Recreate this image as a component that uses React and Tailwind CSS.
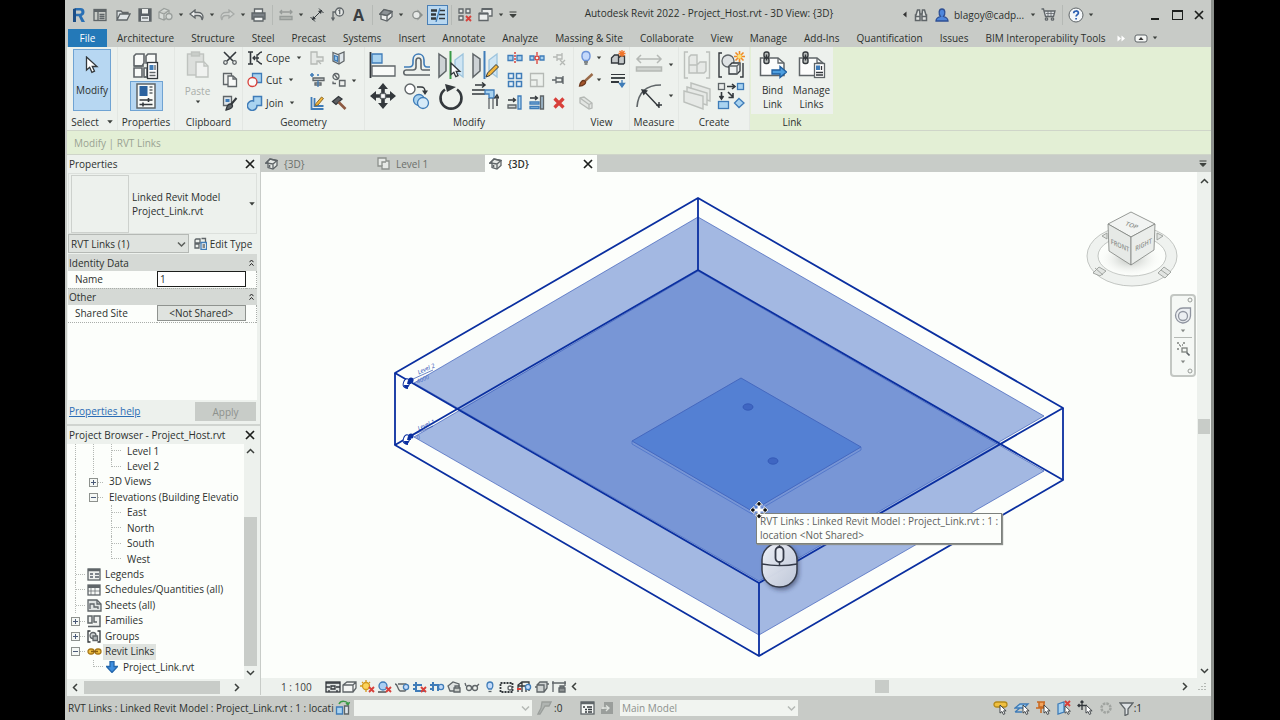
import { clsx } from 'clsx'

/* ---------- drawing helpers ---------- */

const G = '#5f6568'
const D = '#33383c'
const B = '#3f7cb8'
const L = '#a9d3f0'
const M = '#b5b9b5'
const R = '#d8403a'

function Ico({ w = 16, h, className, children }) {
  const height = h || w
  return (
    <svg
      width={w}
      height={height}
      viewBox={`0 0 ${w} ${height}`}
      className={clsx('shrink-0', className)}
      fill="none"
      stroke={G}
      strokeWidth="1.3"
      aria-hidden="true"
    >
      {children}
    </svg>
  )
}

function Caret({ className }) {
  return (
    <svg width="6" height="4" viewBox="0 0 6 4" className={clsx('shrink-0', className)} aria-hidden="true">
      <path d="M0.8 0.5h4.4L3 3.2z" fill="#3c403d" />
    </svg>
  )
}

function Chevron({ dir = 'down', className }) {
  const d = {
    down: 'M1 3l3.5 3.5L8 3',
    up: 'M1 6l3.5-3.5L8 6',
    left: 'M6 1L2.5 4.5 6 8',
    right: 'M3 1l3.5 3.5L3 8',
  }[dir]
  return (
    <svg width="9" height="9" viewBox="0 0 9 9" className={clsx('shrink-0', className)} aria-hidden="true">
      <path d={d} fill="none" stroke="currentColor" strokeWidth="1.5" />
    </svg>
  )
}

function Cross({ size = 10, className }) {
  return (
    <svg width={size} height={size} viewBox="0 0 10 10" className={className} aria-hidden="true">
      <path d="M1 1l8 8M9 1L1 9" stroke="#1c1e1c" strokeWidth="1.7" />
    </svg>
  )
}

const pointer = (x, y, s = 1) => (
  <path
    transform={`translate(${x} ${y}) scale(${s})`}
    d="M0 0v9l2.2-1.8 1.5 3.3 1.7-.8L4 6.5h2.8z"
    fill="#fff"
    stroke={D}
    strokeWidth="1"
  />
)

const redX = (x, y, s = 5) => (
  <path d={`M${x} ${y}l${s} ${s}M${x + s} ${y}l${-s} ${s}`} stroke={R} strokeWidth="1.9" />
)

const chain = (x, y) => (
  <g strokeWidth="1.4" stroke={D} fill="#b9bdbb">
    <rect x={x - 2.5} y={y - 2.5} width="5" height="5.5" rx="2" />
    <rect x={x - 2.5} y={y + 3.5} width="5" height="5.5" rx="2" />
    <path d={`M${x} ${y}v6`} />
  </g>
)

/* ---------- quick access icons ---------- */

const qat = {
  home: (
    <Ico w={14}>
      <rect x="1" y="1.5" width="12" height="11" />
      <path d="M1 3h12" strokeWidth="2" />
      <path d="M5 4v8" />
      <path d="M6.5 6.5h5M6.5 8.5h5M6.5 10.5h5" />
    </Ico>
  ),
  open: (
    <Ico w={15} h={14}>
      <path d="M1 12V3h4l1.5 1.5H12V6M1 12l3-6h10l-3 6z" fill="#dfe4e6" />
    </Ico>
  ),
  save: (
    <Ico w={14}>
      <path d="M1 1h12v12H1z" fill="#5a6067" />
      <path d="M4 1h6v4.5H4z" fill="#eceeed" stroke="none" />
      <path d="M3 8h8v5H3z" fill="#dfe3e6" stroke="none" />
      <path d="M4 10h6" />
    </Ico>
  ),
  sync: (
    <Ico w={15}>
      <g stroke="#9a9f9c" fill="#d6dad7">
        <path d="M1 5l5-3.5 5 2v6L6 13l-5-2zM1 5l5 2 5-3.5M6 7v6" />
        <circle cx="11" cy="9.5" r="3" />
      </g>
    </Ico>
  ),
  undo: (
    <Ico w={15} h={12}>
      <path d="M1 5l5-4v2.5h3c3 0 5 2 5 4.5 0 1.2-.5 2-1 3 0-3-1.5-4.5-4-4.5H6V9z" fill="#eceeed" />
    </Ico>
  ),
  redo: (
    <Ico w={15} h={12}>
      <path d="M14 5L9 1v2.5H6C3 3.5 1 5.5 1 8c0 1.2.5 2 1 3 0-3 1.5-4.5 4-4.5h3V9z" stroke="#a6aaa7" fill="#d0d3d0" />
    </Ico>
  ),
  print: (
    <Ico w={15} h={14}>
      <path d="M3.5 5V1h8v4" fill="#f3f5f4" />
      <path d="M1 5h13v6H1z" fill="#7b8186" />
      <path d="M3 9h9v4H3z" fill="#f3f5f4" />
    </Ico>
  ),
  measure: (
    <Ico w={14} h={12}>
      <path d="M1 3h12M3 1L1 3l2 2M11 1l2 2-2 2" stroke="#969b98" />
      <path d="M1 7.5h12v3H1z" fill="#b4b8b5" stroke="#969b98" />
    </Ico>
  ),
  dimension: (
    <Ico w={14}>
      <path d="M2 12L12 2M0.5 9l4.5 4.5M9 0.5L13.5 5" stroke={D} strokeWidth="1" />
      <path d="M2 12l1-4 3 3zM12 2L8 3l3 3z" fill={D} stroke="none" />
    </Ico>
  ),
  tag: (
    <Ico w={15}>
      <circle cx="9.5" cy="5" r="4" fill="#e6e9e7" />
      <path d="M8.5 3.8l1.2-.8v4.2M5.5 5H3v7M1.5 10.5L3 13l1.5-2.5" />
    </Ico>
  ),
  cube: (
    <Ico w={14}>
      <path d="M1 6l4-4 8 1.5v5L8 13 2 11V6z" fill="#eceeed" />
      <path d="M2 6l6 1.5L13 4M8 7.5V13" />
      <path d="M1 6l4-4.5L13 3.5 8 7.5z" fill="#8d9397" />
    </Ico>
  ),
  section: (
    <Ico w={14}>
      <path d="M7.5 1.5L13 7l-5.5 5.5z" fill="#8a8f8c" stroke="none" />
      <circle cx="6.5" cy="7" r="3.7" fill="#e6e9e7" stroke="#8a8f8c" />
    </Ico>
  ),
  thin: (
    <Ico w={16} h={14}>
      <path d="M1 2.5h6M1 6.5h5M1 10.5h5" strokeWidth="2.4" stroke={D} />
      <path d="M10 2.5h5M9 6.5h6M9 10.5h6" stroke={D} />
      <path d="M10 0L6 14" stroke={B} />
    </Ico>
  ),
  closeHidden: (
    <Ico w={14}>
      <path d="M1 1h4v4H1zM8 1h4v4H8zM1 8h4v4H1z" fill="#e6e9e7" />
      {redX(8, 8)}
    </Ico>
  ),
  windows: (
    <Ico w={15} h={14}>
      <path d="M4 4V1h10v7h-3" fill="#eceeed" />
      <path d="M1 5.5h9v7H1z" fill="#eceeed" />
      <path d="M1 5.5h9M4 1h10" strokeWidth="2.2" />
    </Ico>
  ),
}

function RevitLogo() {
  return (
    <svg width="14" height="16" viewBox="0 0 14 16" aria-hidden="true">
      <path d="M1 2l3-1v14H1z" fill="#1d4e86" />
      <path d="M4 1h4.5C11 1 12.500 2.600 12.500 5c0 2-1 3.300-2.800 3.900L13 15H9.500L6.700 9.300H4V6.800h3.800c1 0 1.600-.7 1.600-1.700S8.800 3.500 7.800 3.500H4z" fill="#2a70b5" />
    </svg>
  )
}

/* ---------- ribbon icons ---------- */

const big = {
  arrow: (
    <Ico w={14} h={18}>
      <path d="M1.5 1v13l3.2-2.7 2.2 5 2.6-1.1L7.3 10.5H12z" fill="#fff" stroke={D} />
    </Ico>
  ),
  typeProps: (
    <Ico w={28}>
      <path d="M2 4l2-2h8v9l-2 3H2zM14 4l2-2h8v9H14zM2 16h8v9l-8 0zM12 16h3v9h-3z" fill="#f8faf8" strokeWidth="1.6" />
      <path d="M2 14h10M12 25h3" strokeWidth="1.6" />
      <rect x="15.5" y="10.5" width="10" height="16" fill="#fff" stroke={D} />
      <path d="M17.5 13h4v5h-4z" fill={B} stroke="none" />
      <path d="M17.5 20.5h6M17.5 23.5h6M23 13v5" />
    </Ico>
  ),
  properties: (
    <Ico w={20} h={26}>
      <rect x="1" y="1" width="18" height="24" fill="#f8faf8" strokeWidth="1.5" />
      <path d="M3.5 3h8v10h-8z" fill="#2b629e" stroke="none" />
      <path d="M13.5 4h3M13.5 7h3M13.5 10h3" />
      <path d="M3.5 17h13M3.5 21.5h13" stroke={D} />
      <path d="M12.5 15v4M7 19.5v4" stroke={D} strokeWidth="1.6" />
    </Ico>
  ),
  paste: (
    <Ico w={24} h={28}>
      <g stroke="#bfc3bf" strokeWidth="1.4">
        <rect x="1.5" y="3" width="16" height="21" fill="#dcdfdc" />
        <rect x="5.5" y="1" width="8" height="4" fill="#c9cdc9" />
        <path d="M10 11h8l4 4v11H10z" fill="#f0f2f0" />
        <path d="M18 11v4h4" />
      </g>
    </Ico>
  ),
  align: (
    <Ico w={28}>
      <path d="M1.5 1v26" stroke={D} strokeWidth="1.8" />
      <path d="M3 3h10v9H3z" fill={L} stroke={B} />
      <path d="M3 15h23v10H3z" fill="#f8faf8" />
    </Ico>
  ),
  offset: (
    <Ico w={28}>
      <path d="M1 16h5c3 0 4-1 4-4V9c0-8 11-8 11 0v3c0 3 1 4 3 4h3" stroke={B} strokeWidth="1.6" />
      <path d="M27 19h-7c-2 0-2-1-2-3V10c0-4-5-4-5 0v6c0 2-1 3-3 3H3c-3 0-3 5 0 5h24" strokeWidth="1.6" />
    </Ico>
  ),
  mirrorPick: (
    <Ico w={28}>
      <path d="M2 3l7 5v12l-7 6z" fill="#cdd2d5" strokeWidth="1.5" />
      <path d="M26 3l-8 6v11l8 6z" fill="#cfe5f3" stroke="#9cc4dd" />
      <path d="M13.5 0v28" stroke="#3a9a46" strokeWidth="2" />
      {pointer(14, 12, 1.3)}
    </Ico>
  ),
  mirrorDraw: (
    <Ico w={28}>
      <path d="M2 3l7 5v12l-7 6z" fill="#cdd2d5" strokeWidth="1.5" />
      <path d="M26 3l-8 6v11l8 6z" fill="#cfe5f3" stroke="#9cc4dd" />
      <path d="M13.5 0v28" stroke={B} strokeWidth="2" />
      <path d="M15 26l1.5-4L25 13.5l2.5 2.5-8.5 8.5z" fill="#f3b53a" stroke={D} strokeWidth="1" />
    </Ico>
  ),
  move: (
    <Ico w={28}>
      <path
        d="M14 1l5 6h-3.2v4h-3.6V7H9zM14 27l5-6h-3.2v-4h-3.6v4H9zM1 14l6-5v3.2h4v3.6H7V19zM27 14l-6-5v3.2h-4v3.6h4V19z"
        fill={D}
        stroke="none"
      />
      <rect x="11.5" y="11.5" width="5" height="5" fill="#fff" />
    </Ico>
  ),
  copy: (
    <Ico w={28}>
      <circle cx="7" cy="7" r="5" fill="#fff" strokeWidth="1.4" />
      <path d="M14 5h4c3 0 4 1 4 5" stroke={D} strokeWidth="1.5" />
      <path d="M19 8.5h6L22 13z" fill={D} stroke="none" />
      <circle cx="16" cy="18" r="5.5" fill={L} stroke={B} />
      <circle cx="20" cy="21" r="5.5" fill="#d5eaf8" stroke={B} />
    </Ico>
  ),
  rotate: (
    <Ico w={28}>
      <path d="M8 7.5A10.5 10.5 0 1 0 20 7.5" stroke={D} strokeWidth="2.6" />
      <path d="M8 2l11 3-9 5z" fill={D} stroke="none" />
    </Ico>
  ),
  trim: (
    <Ico w={28}>
      <path d="M1 8h13M1 12h13" stroke={D} />
      <path d="M14 8h9v8h-5v-4h-4z" fill={L} stroke={B} />
      <path d="M18 16v11M22 16v11" />
      <path d="M4 3h9M11 0.5L14 3l-3 2.5M26 24v-9M23.5 16.5L26 13l2 3.5" stroke={D} strokeWidth="1.5" />
    </Ico>
  ),
  measureBetween: (
    <Ico w={28}>
      <g stroke={M} strokeWidth="1.5">
        <path d="M2 8h24M6 4L2 8l4 4M22 4l4 4-4 4" />
        <path d="M1.5 16h25v4h-25z" fill="#cfd3cf" />
      </g>
    </Ico>
  ),
  aligned: (
    <Ico w={28}>
      <path d="M2 25C3 12 10 3 26 3" strokeWidth="1.6" />
      <path d="M9 9l15 16M21 23h6M24 20v6" stroke={D} strokeWidth="1.4" />
      <path d="M6 7l7 1.5-4.5 5z" fill={D} stroke="none" />
    </Ico>
  ),
  createAssembly: (
    <Ico w={28}>
      <g stroke="#bcc0bc" strokeWidth="1.4">
        <path d="M5 1H1.5v26H5M23 1h3.5v26H23" />
        <path d="M6 6l2-2h6v10H6zM6 14h8v8H6zM14 14l3-3h6v9l-2 2h-7z" fill="#e6e9e6" />
      </g>
    </Ico>
  ),
  createGroup: (
    <Ico w={28}>
      <path d="M5 2H2v24h3M23 26h3V12" stroke={D} strokeWidth="1.4" />
      <circle cx="11" cy="10" r="6" fill="#dfe3e4" />
      <path d="M12 15l3-3h8v8l-3 3h-8z" fill="#eef1f0" stroke={D} />
      <path d="M12 15h8v8M20 15l3-3" />
      <g stroke="#f08a24" strokeWidth="1.6">
        <path d="M22.5 0v11M17 5.5h11M18.5 1.5l8 8M26.5 1.5l-8 8" />
      </g>
      <circle cx="22.5" cy="5.5" r="2.2" fill="#fbe27a" stroke="none" />
    </Ico>
  ),
  createParts: (
    <Ico w={28}>
      <g stroke="#bcc0bc" strokeWidth="1.4" fill="#e6e9e6">
        <path d="M8 1l19 6v12L8 13z" />
        <path d="M4 5l20 6v12L4 17z" />
        <path d="M1 9l19 5v13L1 20z" />
      </g>
    </Ico>
  ),
  createSimilar: (
    <Ico w={28}>
      <rect x="1.5" y="1.5" width="6" height="6" fill="#e9ecea" />
      <rect x="20.5" y="1.5" width="6" height="6" fill={L} stroke={B} />
      <rect x="1.5" y="19.5" width="10" height="7" fill={L} stroke={B} />
      <path d="M22 16.5l5 4.5-5 4.5-4.5-4.5z" fill={L} stroke={B} />
      <g stroke={D} strokeWidth="1.6">
        <path d="M10 4.5h7M15 2l3 2.5L15 7M4.5 10v6M2.5 14l2 3 2-3M11 10l5 5M16 11v4.5h-4.5" />
      </g>
    </Ico>
  ),
  bindLink: (
    <Ico w={28}>
      <path d="M1.5 7H19l6 5v12.5H1.5z" fill="#fcfdfc" strokeWidth="1.5" />
      <path d="M19 7v5h6" />
      {chain(7.5, 3.5)}
      <path d="M13 19h8v-3.5l6.5 5.5-6.5 5.5V23h-8z" fill="#4d9fe0" stroke="#1f5f9f" />
    </Ico>
  ),
  manageLinks: (
    <Ico w={28}>
      <path d="M1.5 7H19l6 5v12.5H1.5z" fill="#fcfdfc" strokeWidth="1.5" />
      <path d="M19 7v5h6" />
      {chain(7.5, 3.5)}
      <rect x="16.5" y="12.5" width="10" height="14" fill="#fff" />
      <path d="M18 14.5h4v4.5h-4z" fill={B} stroke="none" />
      <path d="M23.5 15v4M18 21.5h7M18 24h7" stroke={D} />
    </Ico>
  ),
}

const sm = {
  cut: (
    <Ico>
      <path d="M2 2l9 9M14 2l-9 9" stroke={D} strokeWidth="1.6" />
      <circle cx="3.5" cy="12.5" r="1.8" />
      <circle cx="12.5" cy="12.5" r="1.8" />
    </Ico>
  ),
  copy: (
    <Ico>
      <path d="M1.5 1.5h8v11h-8z" fill="#eef0ee" />
      <path d="M6 4h5l3.5 3v7.5H6z" fill="#f8faf8" />
      <path d="M11 4v3h3" />
    </Ico>
  ),
  match: (
    <Ico>
      <path d="M1.5 1.5h8v9h-8z" fill="#dfe6ea" />
      <path d="M3.5 4h4v3h-4z" fill={B} stroke="none" />
      <path d="M14.5 3L9 9.5" stroke={D} strokeWidth="2" />
      <path d="M4 15c1-5 3-7 6-5.5 1.5 2 0 4.5-6 5.5z" fill={G} stroke={D} />
    </Ico>
  ),
  cope: (
    <Ico>
      <path d="M1 2h5M1 14h5M3.5 2v12" stroke={D} strokeWidth="1.6" />
      <path d="M15 2c-3 0-3 3-5 3v6c2 0 2 3 5 3M6 8h6M8 6L6 8l2 2" stroke={D} />
    </Ico>
  ),
  cutGeo: (
    <Ico>
      <path d="M5.5 1.5h9v9h-9z" fill={L} stroke={B} />
      <circle cx="5.5" cy="10" r="4.5" fill="#f8faf8" stroke={R} />
    </Ico>
  ),
  join: (
    <Ico>
      <path d="M6.5 1.5h8v9H10A4.8 4.8 0 1 1 6.500 6z" fill={L} stroke={B} strokeWidth="1.5" />
    </Ico>
  ),
  wallJoin: (
    <Ico>
      <path d="M2 2h6v5h6v4H8v3H2z" stroke={M} fill="#e6e9e6" />
      <path d="M9 11l3 3" stroke={M} />
    </Ico>
  ),
  beam: (
    <Ico>
      <path d="M1 3h4M3 1v4M8 3h2" stroke={B} strokeWidth="1.6" />
      <path d="M4 6h11v2.5H4z" fill="#d5d9d8" />
      <path d="M6 11h6v2H6z" />
      <path d="M9 8.5V15" stroke={B} />
    </Ico>
  ),
  splitFace: (
    <Ico>
      <path d="M2.5 2v12h12M5.5 3v8h9" stroke={B} strokeWidth="1.8" />
      <path d="M7 8.5l5.5-6.5 2 1.5L9 10l-3 1z" fill="#f3b53a" stroke="#8a6a2a" strokeWidth="1" />
    </Ico>
  ),
  paint: (
    <Ico>
      <path d="M2 2.5l5 2 6-2.5v9L8 14l-6-3z" fill="#dfe6ea" />
      <path d="M3.5 5.5l3 1.2v4.5l-3-1.2z" fill={L} stroke={B} />
      <path d="M8 5v8.5" />
    </Ico>
  ),
  demolish: (
    <Ico>
      <circle cx="5" cy="4.5" r="3" />
      <path d="M3 2l4 5M2 9.5v2h3M8.5 8.5h5.5v5.5H8.5z" fill="#eef0ee" />
    </Ico>
  ),
  hammer: (
    <Ico>
      <path d="M1.5 6.5l6-5 3.5 2.5-6 5.5z" fill="#5d5f63" stroke={D} />
      <path d="M7.5 7l7 7" stroke="#8d5a42" strokeWidth="2.6" />
    </Ico>
  ),
  splitEl: (
    <Ico>
      <path d="M1 5.5h5v5H1zM10 5.5h5v5h-5z" fill={L} stroke={B} />
      <path d="M8 2v12" stroke={R} strokeDasharray="2 1" strokeWidth="1.5" />
    </Ico>
  ),
  splitGap: (
    <Ico>
      <path d="M1 6h4v4H1zM11 6h4v4h-4z" fill={L} stroke={B} />
      <circle cx="8" cy="8" r="2" stroke={R} />
      <path d="M8 2v3M8 11v3" stroke={R} />
    </Ico>
  ),
  unpin: (
    <Ico>
      <path d="M2 7h4M6 4v7M6 5h5v4H6M11 3v5" stroke={M} />
      <path d="M9 10l5 5M14 10l-5 5" stroke={M} />
    </Ico>
  ),
  array: (
    <Ico>
      <path d="M1.5 1.5h5v5h-5zM9.5 1.5h5v5h-5zM1.5 9.5h5v5h-5zM9.5 9.5h5v5h-5z" fill="#e6f1f8" stroke={B} strokeWidth="1.5" />
    </Ico>
  ),
  scale: (
    <Ico>
      <path d="M1.5 1.5h13v13h-13z" stroke={M} />
      <path d="M1.5 8h6.5v6.5" stroke={M} />
    </Ico>
  ),
  pin: (
    <Ico>
      <path d="M1 8h4M5 4.5v7M5 6h6v4H5M12 4v8" stroke={G} />
    </Ico>
  ),
  trimOne: (
    <Ico>
      <path d="M1 5h7M6 3l2.5 2L6 7" stroke={D} />
      <path d="M1 10h8v3H1z" fill="#d0d5d6" />
      <path d="M11 1h3v13h-3z" fill={L} stroke={B} />
    </Ico>
  ),
  trimMany: (
    <Ico>
      <path d="M1 3h7M6 1l2.5 2L6 5" stroke={D} />
      <path d="M1 7h9v2H1zM1 11.5h9v2H1z" fill={L} stroke={B} />
      <path d="M11.5 1h3v13h-3z" fill="#9fb9cc" />
    </Ico>
  ),
  del: (
    <Ico>
      <path d="M3.5 3.5l9 9M12.5 3.5l-9 9" stroke={R} strokeWidth="3.2" />
    </Ico>
  ),
  bulb: (
    <Ico>
      <path d="M6 10.5C3 8 3 1.5 8 1.5s5 6.5 2 9z" fill="#c4d9fb" stroke="#6d93d8" />
      <path d="M6 12h4M6.5 14h3" />
    </Ico>
  ),
  displace: (
    <Ico>
      <path d="M1.5 8l3-3h4v8h-7zM8.5 8l2-2h4v7l-1 1h-5z" fill="#c5c9ca" stroke={D} />
      <path d="M12 0v7M8.5 3.5h7M9.5 1l5 5M14.5 1l-5 5" stroke="#f0742a" strokeWidth="1.3" />
    </Ico>
  ),
  brush: (
    <Ico>
      <path d="M14.5 2L7 9" stroke="#9a6b49" strokeWidth="2.4" />
      <path d="M1.5 14c.5-4 3-6.5 5.5-5 2 2-1.5 5-5.5 5z" fill="#a4552c" stroke="#6d3a1f" />
    </Ico>
  ),
  linework: (
    <Ico>
      <path d="M1 2.5h14" strokeWidth="1" stroke={D} />
      <path d="M1 6h14" strokeWidth="1.8" stroke={D} />
      <path d="M1 10h8" strokeWidth="2" stroke={D} />
      <path d="M12 8v4M9.5 11.5h5L12 15z" stroke={B} fill={B} />
    </Ico>
  ),
  hide: (
    <Ico>
      <path d="M2 3l4-1 8 6v5l-3 1-9-6z" fill="#e2e5e2" stroke={M} />
      <path d="M2 3l9 6.5V14M11 9.5l3-1.5" stroke={M} />
    </Ico>
  ),
}

function IconBtn({ label, className, children }) {
  return (
    <button type="button" aria-label={label} title={label} className={clsx('flex items-center justify-center', className)}>
      {children}
    </button>
  )
}

/* ---------- title bar ---------- */

const Sep = () => (
  <span className="flex w-[6px] shrink-0 justify-center">
    <span className="h-5 w-px bg-[#b5b9b5]" />
  </span>
)

const Drop = ({ label }) => (
  <IconBtn label={label} className="h-6 w-[10px] shrink-0">
    <Caret />
  </IconBtn>
)

function QatButton({ label, active, children }) {
  return (
    <IconBtn
      label={label}
      className={clsx('h-5 w-[21px] shrink-0', active && 'border border-[#4a7fb5] bg-[#b9d8f1]')}
    >
      {children}
    </IconBtn>
  )
}

function TitleBar() {
  return (
    <header className="flex h-[29px] items-center pl-px">
      <QatButton label="Revit"><RevitLogo /></QatButton>
      <QatButton label="Home">{qat.home}</QatButton>
      <span className="w-[3px]" />
      <QatButton label="Open">{qat.open}</QatButton>
      <QatButton label="Save">{qat.save}</QatButton>
      <QatButton label="Synchronize">{qat.sync}</QatButton>
      <Drop label="Synchronize options" />
      <QatButton label="Undo">{qat.undo}</QatButton>
      <Drop label="Undo history" />
      <QatButton label="Redo">{qat.redo}</QatButton>
      <Drop label="Redo history" />
      <QatButton label="Print">{qat.print}</QatButton>
      <Sep />
      <QatButton label="Measure">{qat.measure}</QatButton>
      <Drop label="Measure options" />
      <QatButton label="Aligned Dimension">{qat.dimension}</QatButton>
      <QatButton label="Tag by Category">{qat.tag}</QatButton>
      <QatButton label="Text"><span className="text-[16px] leading-4 font-bold text-[#3a3e41]">A</span></QatButton>
      <Sep />
      <QatButton label="Default 3D View">{qat.cube}</QatButton>
      <Drop label="3D View options" />
      <QatButton label="Section">{qat.section}</QatButton>
      <QatButton label="Thin Lines" active>{qat.thin}</QatButton>
      <Sep />
      <QatButton label="Close Inactive Views">{qat.closeHidden}</QatButton>
      <QatButton label="Switch Windows">{qat.windows}</QatButton>
      <Drop label="Window list" />
      <IconBtn label="Customize toolbar" className="w-[14px] shrink-0">
        <svg width="8" height="7" viewBox="0 0 8 7" aria-hidden="true">
          <path d="M0.5 1h7M1 3.5h6L4 6.5z" fill="#3c403d" stroke="#3c403d" strokeWidth="1" />
        </svg>
      </IconBtn>
      <h1 className="min-w-0 flex-1 truncate pb-1 text-center">
        Autodesk Revit 2022 - Project_Host.rvt - 3D View: {'{3D}'}
      </h1>
      <div className="flex shrink-0 items-center">
        <IconBtn label="Collapse search" className="w-3">
          <svg width="5" height="7" viewBox="0 0 5 7" aria-hidden="true"><path d="M4.5 0.5v6L1 3.5z" fill="#333" /></svg>
        </IconBtn>
        <QatButton label="Search">
          <Ico w={14}>
            <path d="M2 7l1.5-5h2L6 7v5.5H1.5V7zM12 7l-1.5-5h-2L8 7v5.5h4.5V7zM6 6h2" strokeWidth="1.5" fill="#e0e3e1" />
            <path d="M1.5 8.5H6M8 8.5h4.5" />
          </Ico>
        </QatButton>
        <QatButton label="Account">
          <Ico w={14}>
            <path d="M7 1C3.5 1 3.5 6 5.5 8.5 2 9.5 1 11 1 13h12c0-2-1-3.5-4.5-4.5C10.5 6 10.5 1 7 1z" fill="#4d86dc" stroke="#2e4f93" />
          </Ico>
        </QatButton>
        <a href="#account" className="w-[76px] pl-[2px]">blagoy@cadp...</a>
        <Drop label="Account menu" />
        <QatButton label="App Store">
          <Ico w={15}>
            <path d="M0.5 2h2l2 7.5h8L14 4H3.5" fill="#dfe3e6" />
            <path d="M5 6.5h8M7 4v5M10 4v5" strokeWidth="0.8" />
            <circle cx="5.5" cy="12" r="1.2" />
            <circle cx="11.5" cy="12" r="1.2" />
          </Ico>
        </QatButton>
        <Sep />
        <QatButton label="Help">
          <svg width="16" height="16" viewBox="0 0 16 16" aria-hidden="true">
            <circle cx="8" cy="8" r="7" fill="#f3f6f8" stroke="#5f6568" />
            <path d="M5.7 6.3C5.7 3.2 10.5 3.3 10.4 6c0 1.6-2.3 1.8-2.3 3.6M8.1 11v1.5" fill="none" stroke="#2a5db0" strokeWidth="1.7" />
          </svg>
        </QatButton>
        <Drop label="Help menu" />
      </div>
      <div className="ml-12 flex shrink-0 items-center">
        <IconBtn label="Minimize" className="w-[22px]">
          <span className="mt-2 h-[2px] w-2 bg-[#1c1e1c]" />
        </IconBtn>
        <IconBtn label="Maximize" className="w-[22px]">
          <span className="h-[10px] w-[11px] border border-t-2 border-[#1c1e1c]" />
        </IconBtn>
        <IconBtn label="Close" className="w-[22px]"><Cross /></IconBtn>
      </div>
      <span className="w-px" />
    </header>
  )
}

const ribbonTabs = [
  'Architecture', 'Structure', 'Steel', 'Precast', 'Systems', 'Insert', 'Annotate', 'Analyze',
  'Massing & Site', 'Collaborate', 'View', 'Manage', 'Add-Ins', 'Quantification', 'Issues',
  'BIM Interoperability Tools',
]

function RibbonTabs() {
  return (
    <nav className="flex h-[18px] items-center gap-[17px] pl-px whitespace-nowrap">
      <button type="button" className="-mr-[7px] h-full w-[39px] shrink-0 bg-[#2479b8] text-white">File</button>
      {ribbonTabs.map((t) => (
        <button key={t} type="button" className="leading-4">{t}</button>
      ))}
      <div className="-ml-[6px] flex items-center gap-2">
        <svg width="9" height="7" viewBox="0 0 9 7" aria-hidden="true">
          <path d="M0.5 0.5v6L4 3.5zM4.5 0.5v6L8 3.5z" fill="#fff" />
        </svg>
        <IconBtn label="Minimize ribbon">
          <svg width="14" height="9" viewBox="0 0 14 9" aria-hidden="true">
            <rect x="1" y="1" width="12" height="7" rx="2" fill="#f3f5f3" stroke="#5f6568" />
            <path d="M7 3l2.5 3h-5z" fill="#333" />
          </svg>
        </IconBtn>
        <Caret className="-ml-1" />
      </div>
    </nav>
  )
}

/* ---------- ribbon ---------- */

function Panel({ title, className, children, tinted }) {
  return (
    <section className={clsx('flex shrink-0 flex-col', className, !tinted && 'border-r border-[#e3e7e3] bg-[#edf1ed]')}>
      <div className={clsx('flex h-[67px] justify-center', tinted && 'bg-[#edf1ed]')}>{children}</div>
      <h2 className="flex h-[16px] items-center justify-center">{title}</h2>
    </section>
  )
}

function SmallGrid({ rows, className }) {
  return (
    <div className={clsx('grid grid-rows-3', className)}>
      {rows.map(([label, icon]) => (
        <IconBtn key={label} label={label}>{icon}</IconBtn>
      ))}
    </div>
  )
}

function TextTool({ label, icon }) {
  return (
    <button type="button" className="flex items-center gap-[3px]">
      {icon}
      <span className="flex items-center gap-[6px]">
        {label}
        <Caret />
      </span>
    </button>
  )
}

function Ribbon() {
  return (
    <div className="flex min-h-[84px] border-b border-[#cfd5c9] bg-[#e3efd5]">
      <Panel className="w-[51px]" title={<>Select <Caret className="ml-2 scale-125" /></>}>
        <button type="button" className="mt-[2px] flex h-[62px] w-[38px] flex-col items-center gap-2 border border-[#6fa3d3] bg-[#b7d7f2] pt-[6px]">
          {big.arrow}
          Modify
        </button>
      </Panel>
      <Panel className="w-[57px]" title="Properties">
        <div className="flex flex-col items-center pt-1">
          <IconBtn label="Type Properties" className="h-[29px]">{big.typeProps}</IconBtn>
          <IconBtn label="Properties" className="mt-px h-[30px] w-[33px] border border-[#6fa3d3] bg-[#b7d7f2]">
            {big.properties}
          </IconBtn>
        </div>
      </Panel>
      <Panel className="w-[68px]" title="Clipboard">
        <button type="button" className="flex w-[42px] flex-col items-center pt-1 text-[#a9ada9]">
          {big.paste}
          <span className="mt-1 leading-4">Paste</span>
          <Caret className="mt-px" />
        </button>
        <SmallGrid className="w-[22px]" rows={[['Cut to Clipboard', sm.cut], ['Copy to Clipboard', sm.copy], ['Match Type', sm.match]]} />
      </Panel>
      <Panel className="w-[122px]" title="Geometry">
        <div className="grid w-[59px] grid-rows-3 justify-start">
          <TextTool label="Cope" icon={sm.cope} />
          <TextTool label="Cut" icon={sm.cutGeo} />
          <TextTool label="Join" icon={sm.join} />
        </div>
        <SmallGrid className="w-[22px]" rows={[['Wall Joins', sm.wallJoin], ['Beam Joins', sm.beam], ['Split Face', sm.splitFace]]} />
        <SmallGrid className="w-[22px]" rows={[['Paint', sm.paint], ['Demolish', sm.demolish], ['Hammer', sm.hammer]]} />
        <div className="flex w-[10px] items-center"><Caret className="ml-px" /></div>
      </Panel>
      <Panel className="w-[209px]" title="Modify">
        <div className="grid grid-cols-4 grid-rows-2 py-[2px]">
          <IconBtn label="Align" className="w-[34px]">{big.align}</IconBtn>
          <IconBtn label="Offset">{big.offset}</IconBtn>
          <IconBtn label="Mirror - Pick Axis">{big.mirrorPick}</IconBtn>
          <IconBtn label="Mirror - Draw Axis">{big.mirrorDraw}</IconBtn>
          <IconBtn label="Move">{big.move}</IconBtn>
          <IconBtn label="Copy">{big.copy}</IconBtn>
          <IconBtn label="Rotate">{big.rotate}</IconBtn>
          <IconBtn label="Trim/Extend to Corner">{big.trim}</IconBtn>
        </div>
        <SmallGrid className="ml-[2px] w-[22px]" rows={[['Split Element', sm.splitEl], ['Array', sm.array], ['Trim Single', sm.trimOne]]} />
        <SmallGrid className="w-[22px]" rows={[['Split with Gap', sm.splitGap], ['Scale', sm.scale], ['Trim Multiple', sm.trimMany]]} />
        <SmallGrid className="mr-[3px] w-[22px]" rows={[['Unpin', sm.unpin], ['Pin', sm.pin], ['Delete', sm.del]]} />
      </Panel>
      <Panel className="w-[56px]" title="View">
        <SmallGrid className="w-5" rows={[['Hide in View', sm.bulb], ['Override Graphics', sm.brush], ['Selection Box', sm.hide]]} />
        <div className="grid w-3 grid-rows-3 items-center"><Caret /><Caret /></div>
        <SmallGrid className="w-5" rows={[['Displace Elements', sm.displace], ['Linework', sm.linework]]} />
      </Panel>
      <Panel className="w-[49px]" title="Measure">
        <div className="grid grid-rows-2 py-[2px]">
          <IconBtn label="Measure Between" className="gap-[5px]">{big.measureBetween}<Caret /></IconBtn>
          <IconBtn label="Aligned" className="gap-[5px]">{big.aligned}<Caret /></IconBtn>
        </div>
      </Panel>
      <Panel className="w-[71px]" title="Create">
        <div className="grid grid-cols-2 grid-rows-2 gap-x-[6px] py-[2px]">
          <IconBtn label="Create Assembly">{big.createAssembly}</IconBtn>
          <IconBtn label="Create Group">{big.createGroup}</IconBtn>
          <IconBtn label="Create Parts">{big.createParts}</IconBtn>
          <IconBtn label="Create Similar">{big.createSimilar}</IconBtn>
        </div>
      </Panel>
      <Panel className="ml-[1px] w-[82px]" title="Link" tinted>
        <button type="button" className="flex w-[39px] flex-col items-center pt-1 leading-[14px]">
          {big.bindLink}
          <span className="mt-1">Bind<br />Link</span>
        </button>
        <button type="button" className="flex w-[39px] flex-col items-center pt-1 leading-[14px]">
          {big.manageLinks}
          <span className="mt-1">Manage<br />Links</span>
        </button>
      </Panel>
    </div>
  )
}

/* ---------- properties palette ---------- */

function PaletteHeader({ title }) {
  return (
    <div className="flex h-[18px] shrink-0 items-center justify-between pr-[2px] pl-px">
      <h2>{title}</h2>
      <IconBtn label={`Close ${title}`}><Cross /></IconBtn>
    </div>
  )
}

function GroupRow({ title }) {
  return (
    <tr className="h-[17px] bg-[#d5d9d5]">
      <th colSpan={3} className="p-0 font-normal">
        <div className="flex items-center justify-between pr-[3px] pl-px leading-4">
          {title}
          <svg width="5" height="8" viewBox="0 0 5 8" aria-hidden="true">
            <path d="M0.5 3.2L2.5 1l2 2.2M0.5 6.7l2-2.2 2 2.2" fill="none" stroke="#222" />
          </svg>
        </div>
      </th>
    </tr>
  )
}

function Properties() {
  return (
    <section className="flex flex-col border-b-2 border-[#d0d4d0] bg-[#edf1ed] pr-[3px] pl-px">
      <PaletteHeader title="Properties" />
      <div className="flex h-[61px] items-center border border-[#dce0dc] pl-[2px]">
        <div className="size-[58px] border border-[#cdd1cd]" />
        <p className="flex-1 pl-[3px] leading-[14px]">Linked Revit Model<br />Project_Link.rvt</p>
        <IconBtn label="Change type"><Caret className="mr-px scale-125" /></IconBtn>
      </div>
      <div className="flex items-center pb-px">
        <Combo label="Filter" value="RVT Links (1)" className="h-[19px] w-[121px] border border-[#b5b9b5] bg-[#dfe3df]" />
        <button type="button" className="flex flex-1 items-center justify-center gap-[3px]">
          <Ico w={13}>
            <path d="M1 3l1-1h4v4H1zM1 7h4v4H1zM7.5 1.5h4v4" />
            <path d="M7 5.5h5.5v7H7z" fill="#f8faf8" stroke={B} />
            <path d="M8.5 8h2.5M8.5 10h2.5" />
          </Ico>
          Edit Type
        </button>
      </div>
      <table className="w-full table-fixed border-collapse bg-[#fcfefb] text-left">
        <colgroup>
          <col className="w-[89px]" />
          <col />
          <col className="w-[11px]" />
        </colgroup>
        <tbody>
          <GroupRow title="Identity Data" />
          <tr className="h-[17px] border-b border-dotted border-[#a9ada9]">
            <th className="p-0 pl-[7px] font-normal"><label htmlFor="prop-name" className="block leading-4">Name</label></th>
            <td className="p-0">
              <input id="prop-name" defaultValue="1" className="block h-4 w-full border border-[#1c1e1c] bg-white px-[2px]" />
            </td>
            <td className="border-r border-dotted border-[#a9ada9] p-0" />
          </tr>
          <GroupRow title="Other" />
          <tr className="h-[17px] border-b border-dotted border-[#a9ada9]">
            <th className="p-0 pl-[7px] font-normal"><label htmlFor="prop-site" className="block leading-4">Shared Site</label></th>
            <td className="p-0">
              <button id="prop-site" type="button" className="block h-4 w-full border border-[#8f938f] bg-[#dfe3df] leading-[14px]">
                &lt;Not Shared&gt;
              </button>
            </td>
            <td className="border-r border-dotted border-[#a9ada9] p-0" />
          </tr>
        </tbody>
      </table>
      <div className="h-[77px] bg-[#fcfefb]" />
      <div className="flex h-[24px] items-center justify-between pr-px pl-px">
        <a href="#help" className="pb-[2px] text-[#2b6cb5] underline">Properties help</a>
        <button type="button" disabled className="h-[19px] w-[61px] bg-[#c8ccc8] text-[#8d918d]">Apply</button>
      </div>
    </section>
  )
}

function Combo({ label, value, className, muted }) {
  return (
    <div className={clsx('relative shrink-0', className)}>
      <select
        aria-label={label}
        className={clsx('block h-full w-full appearance-none px-[2px] leading-4', muted && 'text-[#8d918d]')}
      >
        <option>{value}</option>
      </select>
      <Chevron className={clsx('pointer-events-none absolute top-1/2 right-[2px] -translate-y-1/2', muted ? 'text-[#b5b9b5]' : 'text-[#5a5e5a]')} />
    </div>
  )
}

/* ---------- project browser ---------- */

const treeIcons = {
  legends: (
    <Ico w={14} h={13}>
      <rect x="1" y="1" width="12" height="11" fill="#eef0ee" />
      <path d="M1 2h12" strokeWidth="2.5" />
      <path d="M3 6h3M8 6h4M3 9h3M8 9h4" strokeWidth="2" stroke="#7d838a" />
    </Ico>
  ),
  schedules: (
    <Ico w={14} h={12}>
      <rect x="1" y="1" width="12" height="10" fill="#f5f7f5" />
      <path d="M1 2.5h12" strokeWidth="3" />
      <path d="M4 4v7M8 4v7M1 7h12" strokeWidth="0.7" />
    </Ico>
  ),
  sheets: (
    <Ico w={15} h={13}>
      <path d="M1 1h9l4 4v7H1z" fill="#dfe3e2" />
      <path d="M3 10V5h4v3h4v2M10 1v4h4" />
    </Ico>
  ),
  families: (
    <Ico w={14} h={13}>
      <path d="M1 8V1h4v7zM1 11.5h12V1H7v6h3" fill="#eef0ee" strokeWidth="1.5" />
    </Ico>
  ),
  groups: (
    <Ico w={14} h={13}>
      <path d="M3.5 1H1v11h2.5M10.5 1H13v11h-2.5" stroke={D} />
      <circle cx="6" cy="5.5" r="3" fill="#cfd3d3" />
      <path d="M6 6h4.5v4.5H6z" fill="#aeb4b6" />
    </Ico>
  ),
  links: (
    <Ico w={15} h={9}>
      <g stroke="#a9791a" fill="#f0c040">
        <rect x="1" y="2" width="6" height="5" rx="2.5" />
        <rect x="8" y="2" width="6" height="5" rx="2.5" />
      </g>
      <path d="M4 4.5h7" stroke="#8a5f10" strokeWidth="1.5" />
    </Ico>
  ),
  down: (
    <Ico w={12}>
      <path d="M4 0.5h4v5h3.5L6 11.5 0.5 5.5H4z" fill="#3e8fe0" stroke="#2568ad" />
    </Ico>
  ),
}

const tree = [
  { guides: ['line', 'line', 'tee'], name: 'Level 1' },
  { guides: ['line', 'line', 'end'], name: 'Level 2' },
  { guides: ['line', 'plus'], name: '3D Views' },
  { guides: ['line', 'minus'], name: 'Elevations (Building Elevatio' },
  { guides: ['line', 'blank', 'tee'], name: 'East' },
  { guides: ['line', 'blank', 'tee'], name: 'North' },
  { guides: ['line', 'blank', 'tee'], name: 'South' },
  { guides: ['line', 'blank', 'end'], name: 'West' },
  { guides: ['tee'], icon: 'legends', name: 'Legends' },
  { guides: ['tee'], icon: 'schedules', name: 'Schedules/Quantities (all)' },
  { guides: ['tee'], icon: 'sheets', name: 'Sheets (all)' },
  { guides: ['plus'], icon: 'families', name: 'Families' },
  { guides: ['plus'], icon: 'groups', name: 'Groups' },
  { guides: ['minus'], icon: 'links', name: 'Revit Links', selected: true },
  { guides: ['blank', 'end'], icon: 'down', name: 'Project_Link.rvt' },
]

function Guide({ kind }) {
  if (kind === 'blank') return <span className="w-[18px] shrink-0" />
  if (kind === 'plus' || kind === 'minus') {
    return (
      <button type="button" aria-label={kind === 'plus' ? 'Expand' : 'Collapse'} className="flex w-[18px] shrink-0 items-center pl-1">
        <svg width="9" height="9" viewBox="0 0 9 9" aria-hidden="true">
          <rect x="0.5" y="0.5" width="8" height="8" fill="#f5f8f5" stroke="#8d918d" />
          <path d={kind === 'plus' ? 'M2 4.5h5M4.5 2v5' : 'M2 4.5h5'} stroke="#4b5a78" />
        </svg>
        <span className="flex-1 border-b border-dotted border-[#b5b9b5]" />
      </button>
    )
  }
  return (
    <span className="flex w-[18px] shrink-0">
      <span className={clsx('w-[9px] border-r border-dotted border-[#b5b9b5]', kind === 'end' && 'h-1/2')} />
      {kind !== 'line' && <span className="h-1/2 flex-1 border-b border-dotted border-[#b5b9b5]" />}
    </span>
  )
}

function Browser() {
  return (
    <section className="flex flex-1 flex-col bg-[#edf1ed] pr-[3px]">
      <div className="pl-px"><PaletteHeader title="Project Browser - Project_Host.rvt" /></div>
      <div className="flex flex-1">
        <ul className="flex min-w-0 flex-1 flex-col bg-[#fcfefb] pb-1">
          {tree.map((n) => (
            <li key={n.name} className="flex min-h-[15px] flex-1 overflow-hidden leading-[15px]">
              {n.guides.map((g, i) => <Guide key={i} kind={g} />)}
              {n.icon && (
                <span className="flex w-[18px] shrink-0 items-center justify-center">{treeIcons[n.icon]}</span>
              )}
              <span className={clsx('whitespace-nowrap', n.icon ? 'px-[2px]' : 'pl-[6px]', n.selected && 'bg-[#dfe3df]')}>
                {n.name}
              </span>
            </li>
          ))}
        </ul>
        <div className="flex w-[13px] flex-col items-center text-[#3c403d]">
          <Chevron dir="up" className="mt-[3px]" />
          <span className="flex-[61]" />
          <span className="w-full flex-[149] bg-[#c8ccc8]" />
          <Chevron className="my-[2px]" />
        </div>
      </div>
      <div className="flex h-[16px] items-center pr-[13px] text-[#3c403d]">
        <Chevron dir="left" className="mx-1" />
        <span className="h-[13px] w-[136px] bg-[#c8ccc8]" />
        <span className="flex-1" />
        <Chevron dir="right" className="mr-[3px]" />
      </div>
    </section>
  )
}

/* ---------- drawing area ---------- */

const LINE = '#0a2fa0'

function LevelHead({ x, y, name, elev }) {
  return (
    <g transform={`translate(${x} ${y})`}>
      <ellipse rx="3" ry="4.5" cx="-2" cy="2" fill="#fff" stroke={LINE} transform="rotate(20)" />
      <path d="M-1-2a4 4 0 0 1 3 4h-4zM-5 3h4v4a4 4 0 0 1-4-4z" fill={LINE} />
      <circle cx="2" cy="-2" r="2.6" fill={LINE} />
      <path d="M4-3l20-9" stroke={LINE} strokeWidth="0.6" />
      <g transform="rotate(-24)" fontSize="6" fontStyle="italic" fill="#2147b3">
        <text x="12" y="-3">{name}</text>
        <text x="7" y="5" fill="#4c6cc4">{elev}</text>
      </g>
    </g>
  )
}

function Model() {
  return (
    <svg width="936" height="506" viewBox="261 172 936 506" role="img" aria-label="Isometric view of the linked model">
      <g fill="#5077cb" fillOpacity="0.52" stroke="#2f51b4" strokeWidth="0.7" strokeOpacity="0.9">
        <path d="M698 217l346 199-285 165-345-198z" />
        <path d="M698 271l346 200-285 164-345-198z" />
      </g>
      <path d="M741 378l120 69-109 64-120-70z" fill="#5480d3" stroke="#4568bf" />
      <path d="M632 441v3l120 70 109-64v-3" fill="none" stroke="#4b71c8" strokeWidth="0.8" />
      <g fill="#3f66c2" stroke="#3155b2" strokeWidth="0.8">
        <ellipse cx="748" cy="407" rx="5" ry="3.2" />
        <ellipse cx="773" cy="461" rx="5" ry="3.2" />
      </g>
      <g fill="none" stroke={LINE} strokeWidth="1.8" strokeLinejoin="round">
        <path d="M698 198l365 210-304 175-364-210z" />
        <path d="M698 270l365 210-304 176-364-211z" />
        <path d="M698 198v72M395 373v72M1063 408v72M759 583v73" />
      </g>
      <LevelHead x={409} y={382} name="Level 2" elev="4000" />
      <LevelHead x={409} y={438} name="Level 1" elev="0" />
      <MouseCursor />
    </svg>
  )
}

function MouseCursor() {
  return (
    <>
      <defs>
        <linearGradient id="mouse" x1="0" y1="0" x2="1" y2="1">
          <stop offset="0" stopColor="#f4f6fa" />
          <stop offset="1" stopColor="#c3cbdc" />
        </linearGradient>
        <filter id="soft" x="-30%" y="-30%" width="160%" height="160%">
          <feGaussianBlur stdDeviation="2" />
        </filter>
      </defs>
      <rect x="764" y="545" width="35" height="45" rx="17" fill="#27314f" fillOpacity="0.55" filter="url(#soft)" />
      <rect x="762" y="543" width="35" height="44" rx="17" fill="url(#mouse)" fillOpacity="0.95" stroke="#343a48" strokeWidth="1.5" />
      <path d="M762 564c10 2 25 2 35 0M779.5 543v4M779.5 562v3" fill="none" stroke="#343a48" strokeWidth="1.5" />
      <rect x="775.5" y="547" width="8" height="15" rx="4" fill="#e6eaf2" stroke="#343a48" strokeWidth="1.8" />
    </>
  )
}

function MoveCursor() {
  return (
    <svg width="18" height="18" viewBox="0 0 18 18" className="absolute top-[329px] left-[489px]" aria-hidden="true">
      <path
        d="M9 0l3.5 4H10v4h4V5.5L18 9l-4 3.5V10h-4v4h2.5L9 18l-3.5-4H8v-4H4v2.5L0 9l4-3.5V8h4V4H5.5z"
        fill="#111"
        stroke="#fff"
        strokeWidth="0.9"
      />
      <path d="M9 5v8M5 9h8" stroke="#fff" strokeWidth="2" />
    </svg>
  )
}

function ViewCube() {
  return (
    <svg width="94" height="82" viewBox="0 0 94 82" className="absolute top-[35px] right-[18px]" role="img" aria-label="View cube">
      <defs>
        <radialGradient id="cubeShade">
          <stop offset="0" stopColor="#b9bdb9" />
          <stop offset="1" stopColor="#fcfefb" stopOpacity="0" />
        </radialGradient>
      </defs>
      <ellipse cx="47" cy="49" rx="45" ry="30" fill="#eff2ef" stroke="#b5b9b5" strokeWidth="0.8" />
      <ellipse cx="47" cy="49" rx="34" ry="20" fill="#fcfefb" stroke="#b5b9b5" strokeWidth="0.8" />
      <ellipse cx="45" cy="52" rx="32" ry="18" fill="url(#cubeShade)" />
      <g stroke="#7d817d" strokeWidth="0.8">
        <path d="M23 17L46 5l24 12-24 13z" fill="#f2f4f2" />
        <path d="M23 17l23 13v28L24 44z" fill="#e6e9e6" />
        <path d="M70 17L46 30v28l23-15z" fill="#eaedea" />
      </g>
      <g fontSize="7" fontWeight="600" fill="#8d918d" textAnchor="middle">
        <text transform="matrix(.88 .3 -.5 .7 45.5 20)">TOP</text>
        <text transform="matrix(.8 .36 0 1 35 41)">FRONT</text>
        <text transform="matrix(.8 -.4 0 1 58.5 40)">RIGHT</text>
      </g>
      <g fill="#e2e5e2" stroke="#9a9e9a" strokeWidth="0.9">
        <path d="M8 66l6-6 7 4-6 5zM10 61l8 7M73 66l6-6 7 5-6 6zM76 63l7 5M17 29l5-3v6zM72 26l6 3-6 4z" />
      </g>
    </svg>
  )
}

function NavBar() {
  return (
    <div className="absolute top-[122px] right-px flex h-[83px] w-[26px] flex-col items-center justify-between rounded-[4px] border-2 border-[#c3c7c3] bg-[#f5f8f5] py-px">
      <IconBtn label="Close navigation bar" className="self-end pr-px">
        <Ico w={6}><circle cx="3" cy="3" r="2" strokeWidth="0.9" stroke="#8d918d" /></Ico>
      </IconBtn>
      <IconBtn label="Steering wheel">
        <Ico w={18}>
          <path d="M9 1h7.5v8A7.5 7.5 0 1 1 9 1z" stroke="#9095a0" fill="#eceff2" />
          <circle cx="9" cy="9" r="4.5" stroke="#9095a0" />
        </Ico>
      </IconBtn>
      <Caret className="opacity-60" />
      <span className="h-px w-[18px] bg-[#b5b9b5]" />
      <IconBtn label="Zoom region">
        <Ico w={14}>
          <path d="M1 1h2M7 1h2M1 7h2M4 4h1M6 3h1M3 3h1" stroke="#7d817d" strokeWidth="1.5" />
          <rect x="6" y="6" width="5" height="4" stroke="#7d817d" />
          <path d="M10.5 10.5l3 3" strokeWidth="1.6" />
        </Ico>
      </IconBtn>
      <Caret className="opacity-60" />
      <IconBtn label="Navigation options" className="self-end pr-px">
        <Ico w={6}><circle cx="3" cy="3" r="2" strokeWidth="0.9" stroke="#8d918d" /></Ico>
      </IconBtn>
    </div>
  )
}

const houseIcon = (
  <Ico w={13}>
    <path d="M1 6l4-4 7 1.5v5L8 12l-5-1.5V6z" fill="#e6e9e6" />
    <path d="M1 6l4-4 7 1.5L8 7zM8 7v5" />
    <path d="M4.5 8v2.5" strokeWidth="1.6" />
  </Ico>
)

const planIcon = (
  <Ico w={13}>
    <g stroke="#8d918d">
      <path d="M1 1h8v3h3v8H5V9H1z" fill="#e6e9e6" />
      <path d="M5 9V5h4" />
    </g>
  </Ico>
)

const viewTabs = [
  { id: 'a', name: '{3D}', icon: houseIcon },
  { id: 'b', name: 'Level 1', icon: planIcon },
  { id: 'c', name: '{3D}', icon: houseIcon, active: true },
]

const v = (children) => <Ico w={16} h={14}>{children}</Ico>
const bulbSmall = (x) => <circle cx={x} cy="7" r="2.6" fill="#c4dcfb" stroke={B} />

const viewControls = [
  ['Detail Level', v(<><rect x="1" y="2" width="14" height="10" fill="#dfe3e2" stroke={D} /><path d="M1 3h14M1 7h4M11 7h4M6 6h4v3H6zM4 12v-2M12 12v-2" stroke={D} /></>)],
  ['Visual Style', v(<path d="M1 5l4-3h9v6l-3 4H1zM1 5h10v7M11 5l3-3" fill="#f5f7f5" />)],
  ['Sun Path', v(<><circle cx="6" cy="6" r="3.5" fill="#fbd45c" stroke="#d49a1c" /><path d="M6 0v2M0 6h2M6 10v2M2 2l1 1M10 2l-1 1" stroke="#d49a1c" />{redX(9, 7)}</>)],
  ['Shadows', v(<><circle cx="6" cy="6" r="4" fill="#a9cff3" stroke={B} /><path d="M1 12h8" stroke={D} />{redX(9, 7)}</>)],
  ['Rendering', v(<><path d="M1 4c3 0 2 5 5 7h5c3-3 3-6 1-7H4" fill="#e6e9e6" />{bulbSmall(12)}</>)],
  ['Crop View', v(<><path d="M1 5h9M4 2v9h9M1 9h3" stroke={B} strokeWidth="2" />{redX(9, 7)}</>)],
  ['Crop Region', v(<><path d="M1 5h8v6M4 2v9M1 9h3" stroke={B} strokeWidth="2" />{bulbSmall(12)}</>)],
  ['Locked View', v(<><path d="M1 6l5-4 6 2v7H3z" fill="#dfe3e2" /><path d="M7 8h6v4H7zM8 8V6h4v2" fill="#c9cdc9" /></>)],
  ['Temporary Hide', v(<><circle cx="5" cy="8" r="2.5" /><circle cx="11" cy="8" r="2.5" /><path d="M2 6L1 3M13 6l2-2M7 8h2" /></>)],
  ['Reveal Hidden', v(<><path d="M6.5 9C4 7 4.5 2 8 2s3.5 5 1.5 7z" fill="#c4dcfb" stroke={B} /><path d="M6.5 11.5h3" /></>)],
  ['View Properties', v(<><path d="M1.5 3h12v9h-12z" strokeDasharray="2 1" strokeWidth="1.8" stroke={D} /><circle cx="11" cy="8" r="2" fill="#fff" /></>)],
  ['Analytical Model', v(<><path d="M2 12V5l4-3h7v9M2 6h8M6 2v10M10 5v7" stroke={D} /><path d="M1 9h4" stroke={R} strokeWidth="2" />{bulbSmall(12)}</>)],
  ['Highlight Sets', v(<><path d="M3 5l3-3h7v6l-3 4H3zM3 5h7v7" fill="#cfd3d2" /><path d="M1 7h2M13 4h2" /></>)],
  ['Constraints', v(<><path d="M1 3h14M2 1v11M14 1v5" /><path d="M8 8h6v4H8zM9 8V6h4v2" fill="#8d9293" /></>)],
]

function Viewport() {
  return (
    <section className="flex min-w-0 flex-1 flex-col border-l border-[#c8ccc8]">
      <div className="flex h-[17px] items-center bg-[#c8ccc8]">
        {viewTabs.map((t) => (
          <div
            key={t.id}
            className={clsx('flex h-full w-[112px] items-center gap-[6px] pr-1 pl-1', t.active ? 'bg-[#fcfefb] font-semibold text-[#2c302d]' : 'text-[#6b6f6b]')}
          >
            {t.icon}
            <button type="button" className="flex-1 text-left">{t.name}</button>
            {t.active && <IconBtn label="Close view"><Cross /></IconBtn>}
          </div>
        ))}
        <IconBtn label="View list" className="mr-1 ml-auto">
          <svg width="8" height="7" viewBox="0 0 8 7" aria-hidden="true">
            <path d="M0.5 1h7M1 3.5h6L4 6.5z" fill="#3c403d" stroke="#3c403d" />
          </svg>
        </IconBtn>
      </div>
      <div className="flex flex-1 bg-[#fcfefb]">
        <div className="relative flex min-w-0 flex-1 items-center justify-center overflow-hidden">
          <div className="relative shrink-0">
            <Model />
            <div role="tooltip" className="absolute top-[341px] left-[495px] border border-[#7d817d] bg-[#fcfefb] px-[3px] pb-px leading-[14px] whitespace-nowrap text-[#5c605c] shadow-[1px_1px_1px_#8d918d]">
              RVT Links : Linked Revit Model : Project_Link.rvt : 1 :<br />
              location &lt;Not Shared&gt;
            </div>
            <MoveCursor />
          </div>
          <ViewCube />
          <NavBar />
        </div>
        <div className="flex w-[14px] flex-col items-center bg-[#edf1ed] text-[#3c403d]">
          <Chevron dir="up" className="mt-[5px]" />
          <span className="flex-[232]" />
          <span className="h-[15px] w-3 bg-[#c8ccc8]" />
          <span className="flex-[232]" />
          <Chevron className="mb-[3px]" />
        </div>
      </div>
      <div className="flex h-[17px] items-center bg-[#edf1ed] text-[#3c403d]">
        <span className="w-[63px] pl-5 whitespace-nowrap">1 : 100</span>
        <div className="grid w-[244px] grid-cols-14">
          {viewControls.map(([label, icon]) => <IconBtn key={label} label={label}>{icon}</IconBtn>)}
        </div>
        <Chevron dir="left" className="ml-[2px]" />
        <span className="flex-[294]" />
        <span className="h-[13px] w-[14px] bg-[#c8ccc8]" />
        <span className="flex-[290]" />
        <Chevron dir="right" />
        <Ico w={10} className="mr-1 ml-2">
          <path d="M8 1v1M8 4v1M8 7v1M5 4v1M5 7v1M2 7v1" strokeWidth="2" stroke="#b5b9b5" />
        </Ico>
      </div>
    </section>
  )
}

/* ---------- status bar ---------- */

const selectIcons = [
  ['Select links', <Ico><rect x="1" y="2" width="13" height="5" rx="2.5" fill="#f0c040" stroke="#b58a1a" />{pointer(7, 5, 0.9)}</Ico>],
  ['Select underlay', <Ico><path d="M1 8l5-4h8l-4 4zM1 12l5-4M1 12h7" fill={L} stroke={B} />{pointer(9, 5, 0.9)}</Ico>],
  ['Select pinned', <Ico><path d="M2 2h8M4 2v5h5V2M1 8h10M6 8v5" fill="#f2a35c" stroke="#c96a20" strokeWidth="1.5" />{pointer(9, 5, 0.9)}</Ico>],
  ['Select by face', <Ico><path d="M2 4l6-2v10l-6 2z" fill={L} stroke={B} />{redX(9, 1)}{pointer(9, 6, 0.8)}</Ico>],
  ['Drag on selection', <Ico><path d="M5 1v9M1 5.5h9M3.5 2.5L5 1l1.5 1.5M2.5 4L1 5.5 2.5 7" stroke={D} />{pointer(9, 5, 0.9)}</Ico>],
  ['Background processes', <Ico><circle cx="8" cy="8" r="4.5" stroke="#a0a4a0" strokeWidth="2.5" strokeDasharray="2.5 1" /></Ico>],
]

function StatusBar() {
  return (
    <footer className="flex h-6 items-center bg-[#c8cbc7] pl-px">
      <p className="w-[263px] whitespace-nowrap">RVT Links : Linked Revit Model : Project_Link.rvt : 1 : locati</p>
      <IconBtn label="Worksets" className="w-[23px]">
        <Ico>
          <path d="M4 4c2-4 8-3 9 0M11 3l2 2 1.5-3" stroke="#3a9a46" strokeWidth="1.5" />
          <path d="M1.5 7h6v7h-6z" fill={L} stroke={B} />
          <path d="M9.5 6h4v8h-4z" fill="#dfe6ea" />
        </Ico>
      </IconBtn>
      <Combo label="Active workset" value="" muted className="h-4 w-[178px] bg-[#f1f4f0]" />
      <span className="flex w-[45px] items-center gap-[2px] pl-[5px]">
        <Ico w={15} h={14}>
          <path d="M5 1h9l-2 4H8L3 13H1l3-6z" fill="#b0b4b1" stroke="#9a9e9b" />
        </Ico>
        :0
      </span>
      <IconBtn label="Design Options" className="w-[20px]">
        <Ico w={15} h={14}>
          <rect x="1" y="1" width="13" height="12" fill="#f5f7f5" />
          <path d="M1 2h13" strokeWidth="2.5" />
          <path d="M3 6h2M7 6h5M5 8.5h2M8 8.5h4M5 11h2M8 11h4" stroke={D} />
        </Ico>
      </IconBtn>
      <IconBtn label="Exclude Options" className="mr-[3px] w-[20px]">
        <Ico w={14}>
          <path d="M4 1h9v12H1V8h3z" fill="#9a9e9b" stroke="none" />
          <path d="M2 7h6M6 4.5L9 7l-3 3" stroke="#dfe3df" />
        </Ico>
      </IconBtn>
      <Combo label="Design option" value="Main Model" muted className="h-4 w-[178px] bg-[#f1f4f0]" />
      <div className="mr-[69px] ml-auto flex items-center">
        {selectIcons.map(([label, icon]) => <IconBtn key={label} label={label} className="w-[21px]">{icon}</IconBtn>)}
        <IconBtn label="Filter" className="pl-[2px]">
          <Ico w={15}>
            <path d="M1 2h13L9 8v5l-3 1.5V8z" fill="#dfe3e5" />
          </Ico>
          :1
        </IconBtn>
      </div>
    </footer>
  )
}

export default function App() {
  return (
    <div className="min-h-screen bg-black pr-[66px] pl-[65px]">
      <div className="flex min-h-screen flex-col border-r-[3px] border-l-2 border-r-[#8d918d] border-l-[#c8cbc7] bg-[#c8cbc7] font-['Open_Sans','Noto_Sans',sans-serif] text-[10px] leading-4 text-[#2c302d]">
        <TitleBar />
        <RibbonTabs />
        <Ribbon />
        <div className="flex h-[24px] items-center border-b border-[#cfd5c9] bg-[#e3efd5] pl-[7px] text-[#9aa293]">
          Modify | RVT Links
        </div>
        <main className="flex flex-1 border-b border-[#edf1ed]">
          <aside className="flex w-[193px] shrink-0 flex-col">
            <Properties />
            <Browser />
          </aside>
          <Viewport />
        </main>
        <StatusBar />
      </div>
    </div>
  )
}
